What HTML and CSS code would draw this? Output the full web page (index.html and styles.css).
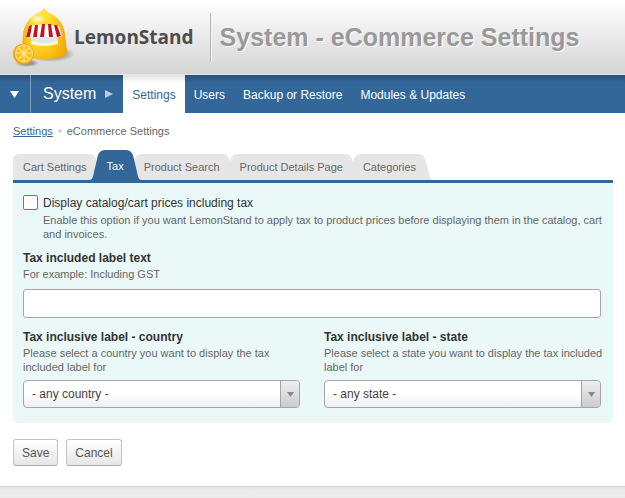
FILE: index.html
```html
<!DOCTYPE html>
<html lang="en">
<head>
<meta charset="utf-8">
<title>System - eCommerce Settings</title>
<link rel="stylesheet" href="styles.css">
</head>
<body>
<header class="header">
  <a class="logo" href="#">
    <svg class="logo-mark" viewBox="0 0 64 62" width="64" height="62" aria-hidden="true">
      <defs>
        <linearGradient id="body" x1="0" x2="1" y1="0" y2="0">
          <stop offset="0" stop-color="#f5ad00"/><stop offset=".25" stop-color="#ffdc35"/><stop offset=".6" stop-color="#ffd51c"/><stop offset="1" stop-color="#f3a300"/>
        </linearGradient>
        <linearGradient id="shade" x1="0" x2="0" y1="0" y2="1">
          <stop offset="0" stop-color="#fff16a" stop-opacity=".6"/><stop offset=".5" stop-color="#ffd51c" stop-opacity="0"/><stop offset="1" stop-color="#f09a00" stop-opacity=".5"/>
        </linearGradient>
        <radialGradient id="shine"><stop offset="0" stop-color="#fff" stop-opacity=".85"/><stop offset="1" stop-color="#fff" stop-opacity="0"/></radialGradient>
        <radialGradient id="shadow"><stop offset=".5" stop-color="#776c50" stop-opacity=".6"/><stop offset="1" stop-color="#776c50" stop-opacity="0"/></radialGradient>
      </defs>
      <ellipse cx="39" cy="48" rx="24" ry="8" fill="url(#shadow)"/>
      <path d="M32 2C34 5 37 7 41 9C48 13 52 20 53 28L55 45C55 50 46 53 33 53C20 53 10 50 10 45L11 28C12 20 16 13 24 8C28 6 30 5 32 2Z" fill="url(#body)"/>
      <path d="M32 2C34 5 37 7 41 9C48 13 52 20 53 28L55 45C55 50 46 53 33 53C20 53 10 50 10 45L11 28C12 20 16 13 24 8C28 6 30 5 32 2Z" fill="url(#shade)"/>
      <ellipse cx="26" cy="13" rx="8" ry="5" fill="url(#shine)"/>
      <path d="M19 28H45L46 37Q32 41 19 37Z" fill="#e4e4ea"/>
      <path d="M19 35Q32 39 46 35V38Q32 42 19 38Z" fill="#fff8d8"/>
      <path d="M17 20Q32 17 47 20L50 29Q49 33 46 29Q43 34 40 29Q37 34 34 29Q31 34 28 29Q25 34 22 29Q18 34 14 30Z" fill="#fff"/>
      <path d="M17 20L20 19L18 31H14ZM23 19H26L25 31H21ZM30 18H33L32 31H28ZM36 18H39L41 31H37ZM42 19L45 19L49 30L45 31Z" fill="#c51420"/>
      <ellipse cx="15" cy="57" rx="12" ry="4" fill="url(#shadow)"/>
      <circle cx="11.500" cy="48" r="10.500" fill="#f4a20a"/>
      <circle cx="12" cy="47.500" r="9" fill="#fff2b0"/>
      <circle cx="12" cy="47.500" r="8" fill="#ffbd1c"/>
      <path d="M12 39V56M4 47H20M6 41L18 54M18 41L6 54" stroke="#ffe98e" stroke-width="1.200"/>
    </svg>
    <span class="logo-name">LemonStand</span>
  </a>
  <h1 class="title">System - eCommerce Settings</h1>
</header>

<nav class="nav">
  <button class="nav-toggle" type="button" aria-label="Modules"><svg viewBox="0 0 9 7" width="9" height="7"><path d="M0 0H9L4.500 7Z" fill="#fff"/></svg></button>
  <a class="nav-section" href="#">System <svg viewBox="0 0 8 8" width="8" height="8" aria-hidden="true"><path d="M0 0L8 4L0 8Z" fill="#b9cbdf"/></svg></a>
  <a class="nav-link nav-link-active" href="#">Settings</a>
  <a class="nav-link" href="#">Users</a>
  <a class="nav-link" href="#">Backup or Restore</a>
  <a class="nav-link" href="#">Modules &amp; Updates</a>
</nav>

<main class="main">
  <div class="crumbs"><a href="#">Settings</a><span class="dot"></span><span>eCommerce Settings</span></div>

  <div class="tabs">
    <a class="tab tab-first" href="#"><span class="tab-text">Cart Settings</span><svg class="cap cap-right" viewBox="0 0 16 26" preserveAspectRatio="none"><path d="M0 0C5 0 7 3 8 8L11 19C12 24 13 26 16 26H0Z"/></svg></a>
    <a class="tab tab-active" href="#"><svg class="cap cap-left" viewBox="0 0 16 26" preserveAspectRatio="none"><path d="M16 0C11 0 9 3 8 8L5 19C4 24 3 26 0 26H16Z"/></svg><span class="tab-text">Tax</span><svg class="cap cap-right" viewBox="0 0 16 26" preserveAspectRatio="none"><path d="M0 0C5 0 7 3 8 8L11 19C12 24 13 26 16 26H0Z"/></svg></a>
    <a class="tab" href="#"><svg class="cap cap-left" viewBox="0 0 16 26" preserveAspectRatio="none"><path d="M16 0C11 0 9 3 8 8L5 19C4 24 3 26 0 26H16Z"/></svg><span class="tab-text">Product Search</span><svg class="cap cap-right" viewBox="0 0 16 26" preserveAspectRatio="none"><path d="M0 0C5 0 7 3 8 8L11 19C12 24 13 26 16 26H0Z"/></svg></a>
    <a class="tab" href="#"><svg class="cap cap-left" viewBox="0 0 16 26" preserveAspectRatio="none"><path d="M16 0C11 0 9 3 8 8L5 19C4 24 3 26 0 26H16Z"/></svg><span class="tab-text">Product Details Page</span><svg class="cap cap-right" viewBox="0 0 16 26" preserveAspectRatio="none"><path d="M0 0C5 0 7 3 8 8L11 19C12 24 13 26 16 26H0Z"/></svg></a>
    <a class="tab" href="#"><svg class="cap cap-left" viewBox="0 0 16 26" preserveAspectRatio="none"><path d="M16 0C11 0 9 3 8 8L5 19C4 24 3 26 0 26H16Z"/></svg><span class="tab-text">Categories</span><svg class="cap cap-right" viewBox="0 0 16 26" preserveAspectRatio="none"><path d="M0 0C5 0 7 3 8 8L11 19C12 24 13 26 16 26H0Z"/></svg></a>
  </div>

  <form>
    <div class="panel">
      <div class="check">
        <input class="check-box" type="checkbox" id="display">
        <div>
          <label class="check-label" for="display">Display catalog/cart prices including tax</label>
          <p class="hint">Enable this option if you want LemonStand to apply tax to product prices before displaying them in the catalog, cart and invoices.</p>
        </div>
      </div>
      <div class="field">
        <label class="label" for="text">Tax included label text</label>
        <p class="hint">For example: Including GST</p>
        <input class="input" type="text" id="text">
      </div>
      <div class="columns">
        <div class="field">
          <label class="label" for="country">Tax inclusive label - country</label>
          <p class="hint">Please select a country you want to display the tax included label for</p>
          <div class="select">
            <select id="country"><option>- any country -</option></select>
            <span class="select-arrow"><svg viewBox="0 0 7 5" width="7" height="5"><path d="M0 0H7L3.500 5Z" fill="#888"/></svg></span>
          </div>
        </div>
        <div class="field">
          <label class="label" for="state">Tax inclusive label - state</label>
          <p class="hint">Please select a state you want to display the tax included label for</p>
          <div class="select">
            <select id="state"><option>- any state -</option></select>
            <span class="select-arrow"><svg viewBox="0 0 7 5" width="7" height="5"><path d="M0 0H7L3.500 5Z" fill="#888"/></svg></span>
          </div>
        </div>
      </div>
    </div>
    <div class="actions">
      <button class="button" type="submit">Save</button>
      <button class="button" type="button">Cancel</button>
    </div>
  </form>
</main>
<footer class="footer"></footer>
</body>
</html>
```
FILE: styles.css
```css
* { box-sizing: border-box; }

body {
  margin: 0;
  min-height: 100vh;
  display: flex;
  flex-direction: column;
  background: #fff;
  color: #333;
  font: 12px/14px "Liberation Sans", Arial, sans-serif;
}

a { text-decoration: none; }
p { margin: 0; }
svg { display: block; }

.header {
  display: flex;
  align-items: center;
  height: 75px;
  padding-left: 12px;
  background: linear-gradient(#fff, #d4d4d4);
  border-bottom: 1px solid #e6e6e6;
}

.logo {
  display: flex;
  align-items: center;
}

.logo-mark { margin-right: -2px; }

.logo-name {
  color: #4d4d4d;
  font: bold 19px/24px "Open Sans", sans-serif;
}

.title {
  margin: 0 0 0 16px;
  padding-left: 9px;
  border-left: 1px solid #b5b5b5;
  box-shadow: inset 1px 0 #f4f4f4;
  color: #999;
  font-size: 25px;
  line-height: 48px;
  text-shadow: 1px 1px #fff;
  white-space: nowrap;
}

.nav {
  display: flex;
  height: 38px;
  background: linear-gradient(#28507b, #336699 8px);
}

.nav-toggle {
  display: flex;
  align-items: center;
  justify-content: center;
  width: 31px;
  padding: 0 2px 0 0;
  border: 0;
  border-right: 1px solid #7f9fc0;
  background: none;
}

.nav-section {
  display: flex;
  align-items: center;
  gap: 9px;
  padding: 0 10px 0 12px;
  color: #fff;
  font-size: 16px;
}

.nav-link {
  padding: 0 9px;
  color: #fff;
  line-height: 40px;
  white-space: nowrap;
}

.nav-link-active {
  background: linear-gradient(#e2e2e2, #fff 8px);
  color: #336699;
}

.main { padding: 11px 12px 20px 13px; }

.crumbs {
  display: flex;
  align-items: center;
  color: #666;
  font-size: 11px;
}

.crumbs a {
  color: #336699;
  text-decoration: underline;
}

.dot {
  width: 4px;
  height: 4px;
  margin: 0 5px;
  border-radius: 2px;
  background: #d8d8d8;
}

.tabs {
  display: flex;
  align-items: flex-end;
  margin-top: 12px;
  border-bottom: 3px solid #336699;
  font-size: 11px;
  line-height: 26px;
}

.tab {
  display: flex;
  height: 26px;
  color: #666;
}

.tab-text {
  padding: 0 2px;
  background: #e6e6e6;
  white-space: nowrap;
}

.tab-first .tab-text {
  padding-left: 10px;
  border-top-left-radius: 6px;
}

.tab-active {
  position: relative;
  z-index: 1;
  height: 30px;
  color: #fff;
  line-height: 32px;
}

.tab-active .tab-text { background: #336699; }

.cap {
  width: 16px;
  height: 100%;
  fill: #e6e6e6;
}

.cap-left { margin-left: -8px; }
.cap-right { margin-right: -8px; }
.tab-active .cap { fill: #336699; }

.panel {
  padding: 12px 12px 15px 10px;
  border-radius: 0 0 5px 5px;
  background: #ebf8f8;
}

.hint {
  margin-right: -8px;
  color: #666;
  font-size: 11px;
}

.check {
  display: flex;
  gap: 5px;
}

.check-box {
  flex: none;
  appearance: none;
  width: 15px;
  height: 15px;
  margin: 0;
  border: 1px solid #1c94c4;
  border-radius: 2px;
  background: #fff;
}

.check-label,
.label {
  display: block;
  line-height: 16px;
}

.check-label { margin-bottom: 2px; }

.label {
  margin-bottom: 1px;
  font-weight: bold;
}

.field { padding-top: 9px; }

.input {
  display: block;
  width: 100%;
  height: 29px;
  margin-top: 8px;
  padding: 0 8px;
  border: 1px solid #a6a6a6;
  border-radius: 3px;
  background: #fff;
  font: inherit;
}

.columns {
  display: grid;
  grid-template-columns: 1fr 1fr;
  gap: 24px;
  padding-top: 2px;
}

.select {
  display: grid;
  height: 28px;
  margin-top: 6px;
}

.select select,
.select-arrow { grid-area: 1 / 1; }

.select select {
  appearance: none;
  width: 100%;
  padding: 0 28px 0 8px;
  border: 1px solid #a6a6a6;
  border-radius: 4px;
  background: linear-gradient(#fff 50%, #eee);
  color: #444;
  font: inherit;
}

.select-arrow {
  display: flex;
  align-items: center;
  justify-content: center;
  justify-self: end;
  width: 19px;
  margin: 1px 1px 1px 0;
  border-left: 1px solid #a6a6a6;
  border-radius: 0 3px 3px 0;
  background: linear-gradient(#eee, #ccc);
  pointer-events: none;
}

.actions {
  display: flex;
  gap: 8px;
  margin-top: 16px;
}

.button {
  height: 27px;
  padding: 0 8px;
  border: 1px solid #c4c4c4;
  border-bottom-color: #aaa;
  border-radius: 3px;
  background: linear-gradient(#fff, #e6e6e6);
  color: #555;
  font: inherit;
}

.footer {
  flex: 1;
  min-height: 12px;
  border-top: 1px solid #d6d6d6;
  background: linear-gradient(#e4e4e4, #ebebeb 4px);
}
```
